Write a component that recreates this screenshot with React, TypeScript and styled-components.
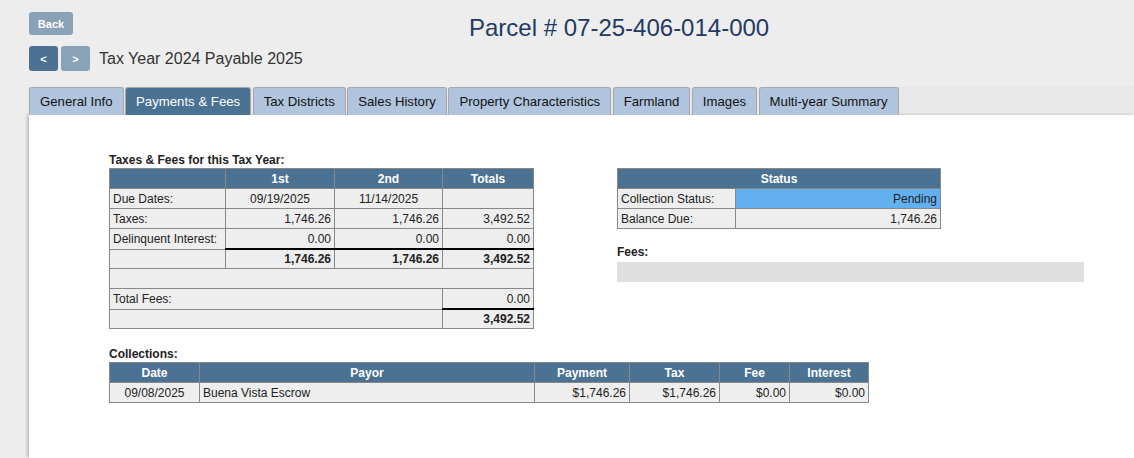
import React from 'react';
import styled, { createGlobalStyle } from 'styled-components';

const GlobalStyle = createGlobalStyle`
  html, body {
    margin: 0;
    padding: 0;
    background: #ededed;
    font-family: 'Liberation Sans', Arial, sans-serif;
    color: #222;
  }
`;

const tabs = [
  'General Info',
  'Payments & Fees',
  'Tax Districts',
  'Sales History',
  'Property Characteristics',
  'Farmland',
  'Images',
  'Multi-year Summary',
];

const collections = [
  {
    date: '09/08/2025',
    payor: 'Buena Vista Escrow',
    payment: '$1,746.26',
    tax: '$1,746.26',
    fee: '$0.00',
    interest: '$0.00',
  },
];

const App: React.FC = () => {
  return (
    <Page>
      <GlobalStyle />
      <Header>
        <HeaderLeft>
          <BackButton>Back</BackButton>
          <YearRow>
            <NavButton $active>&lt;</NavButton>
            <NavButton>&gt;</NavButton>
            <YearText>Tax Year 2024 Payable 2025</YearText>
          </YearRow>
        </HeaderLeft>
        <Title>Parcel # 07-25-406-014-000</Title>
      </Header>

      <TabBar>
        {tabs.map((t) => (
          <Tab key={t} $active={t === 'Payments & Fees'}>
            {t}
          </Tab>
        ))}
      </TabBar>

      <Panel>
        <TopRow>
          <LeftCol>
            <SectionLabel>Taxes &amp; Fees for this Tax Year:</SectionLabel>
            <Grid>
              <colgroup>
                <col style={{ width: 116 }} />
                <col style={{ width: 109 }} />
                <col style={{ width: 108 }} />
                <col style={{ width: 91 }} />
              </colgroup>
              <thead>
                <tr>
                  <Th></Th>
                  <Th>1st</Th>
                  <Th>2nd</Th>
                  <Th>Totals</Th>
                </tr>
              </thead>
              <tbody>
                <tr>
                  <Td>Due Dates:</Td>
                  <Td $align="center">09/19/2025</Td>
                  <Td $align="center">11/14/2025</Td>
                  <Td></Td>
                </tr>
                <tr>
                  <Td>Taxes:</Td>
                  <Td $align="right">1,746.26</Td>
                  <Td $align="right">1,746.26</Td>
                  <Td $align="right">3,492.52</Td>
                </tr>
                <tr>
                  <Td>Delinquent Interest:</Td>
                  <Td $align="right">0.00</Td>
                  <Td $align="right">0.00</Td>
                  <Td $align="right">0.00</Td>
                </tr>
                <tr>
                  <Td $short></Td>
                  <Td $align="right" $bold $rule>1,746.26</Td>
                  <Td $align="right" $bold $rule>1,746.26</Td>
                  <Td $align="right" $bold $rule>3,492.52</Td>
                </tr>
                <tr>
                  <Td colSpan={4}></Td>
                </tr>
                <tr>
                  <Td colSpan={3}>Total Fees:</Td>
                  <Td $align="right">0.00</Td>
                </tr>
                <tr>
                  <Td colSpan={3} $short></Td>
                  <Td $align="right" $bold $rule>3,492.52</Td>
                </tr>
              </tbody>
            </Grid>
          </LeftCol>

          <RightCol>
            <Grid>
              <colgroup>
                <col style={{ width: 118 }} />
                <col style={{ width: 205 }} />
              </colgroup>
              <thead>
                <tr>
                  <Th colSpan={2}>Status</Th>
                </tr>
              </thead>
              <tbody>
                <tr>
                  <Td>Collection Status:</Td>
                  <Td $align="right" $highlight>Pending</Td>
                </tr>
                <tr>
                  <Td>Balance Due:</Td>
                  <Td $align="right">1,746.26</Td>
                </tr>
              </tbody>
            </Grid>
            <FeesLabel>Fees:</FeesLabel>
            <FeesBar />
          </RightCol>
        </TopRow>

        <CollectionsLabel>Collections:</CollectionsLabel>
        <Grid>
          <colgroup>
            <col style={{ width: 90 }} />
            <col style={{ width: 335 }} />
            <col style={{ width: 95 }} />
            <col style={{ width: 90 }} />
            <col style={{ width: 70 }} />
            <col style={{ width: 79 }} />
          </colgroup>
          <thead>
            <tr>
              <Th>Date</Th>
              <Th>Payor</Th>
              <Th>Payment</Th>
              <Th>Tax</Th>
              <Th>Fee</Th>
              <Th>Interest</Th>
            </tr>
          </thead>
          <tbody>
            {collections.map((c) => (
              <tr key={c.date + c.payor}>
                <Td $align="center">{c.date}</Td>
                <Td>{c.payor}</Td>
                <Td $align="right">{c.payment}</Td>
                <Td $align="right">{c.tax}</Td>
                <Td $align="right">{c.fee}</Td>
                <Td $align="right">{c.interest}</Td>
              </tr>
            ))}
          </tbody>
        </Grid>
      </Panel>
    </Page>
  );
};

const Page = styled.div`
  min-height: 458px;
  overflow: hidden;
`;

const Header = styled.div`
  display: grid;
  grid-template-columns: 440px auto;
  padding: 12px 0 0 29px;
  height: 75px;
  box-sizing: border-box;
`;

const HeaderLeft = styled.div`
  display: flex;
  flex-direction: column;
  gap: 11px;
`;

const BackButton = styled.button`
  width: 44px;
  height: 23px;
  padding: 0;
  border: none;
  border-radius: 3px;
  background: #8aa2b7;
  color: #fff;
  font-family: 'Liberation Sans', Arial, sans-serif;
  font-size: 11px;
  font-weight: bold;
`;

const YearRow = styled.div`
  display: flex;
  align-items: center;
  gap: 3px;
`;

const NavButton = styled.button<{ $active?: boolean }>`
  width: 29px;
  height: 25px;
  padding: 0;
  border: none;
  border-radius: 3px;
  background: ${(p) => (p.$active ? '#4c7192' : '#8aa2b7')};
  color: #fff;
  font-family: 'Liberation Sans', Arial, sans-serif;
  font-size: 11px;
  font-weight: bold;
`;

const YearText = styled.span`
  margin-left: 6px;
  font-size: 16px;
  color: #333;
`;

const Title = styled.h1`
  margin: 2px 0 0;
  font-size: 24px;
  font-weight: normal;
  color: #233a63;
`;

const TabBar = styled.div`
  display: flex;
  gap: 1.5px;
  margin: 12px 0 0 29px;
  height: 28px;
  background: #e8e8e8;
  box-shadow: 0 1px 2px rgba(0, 0, 0, 0.08);
`;

const Tab = styled.div<{ $active?: boolean }>`
  display: flex;
  align-items: center;
  padding: 0 10px;
  height: 27px;
  border: 1px solid #a8a8a8;
  border-bottom: none;
  border-radius: 3px 3px 0 0;
  background: ${(p) => (p.$active ? '#4a7293' : '#b0c4de')};
  color: ${(p) => (p.$active ? '#fff' : '#111')};
  font-size: 13.2px;
  white-space: nowrap;
`;

const Panel = styled.div`
  margin-left: 29px;
  min-height: 343px;
  background: #fff;
  box-shadow: -2px 0 3px rgba(0, 0, 0, 0.2);
  padding: 37px 0 0 80px;
  box-sizing: border-box;
`;

const TopRow = styled.div`
  display: flex;
  gap: 83px;
  align-items: flex-start;
`;

const LeftCol = styled.div`
  display: flex;
  flex-direction: column;
`;

const RightCol = styled.div`
  display: flex;
  flex-direction: column;
  width: 467px;
  padding-top: 16px;
`;

const SectionLabel = styled.div`
  font-size: 12px;
  font-weight: bold;
  color: #222;
  line-height: 16px;
`;

const FeesLabel = styled(SectionLabel)`
  margin-top: 14px;
  line-height: 19px;
`;

const CollectionsLabel = styled(SectionLabel)`
  margin-top: 17px;
`;

const FeesBar = styled.div`
  height: 20px;
  background: #dfdfdf;
`;

const Grid = styled.table`
  align-self: flex-start;
  border-collapse: collapse;
  table-layout: fixed;
  border: 1px solid #888;
  font-size: 12px;
`;

const Th = styled.th`
  height: 19px;
  padding: 0 3px;
  background: #4b7292;
  color: #fff;
  font-weight: bold;
  text-align: center;
  border: 1px solid #888;
`;

const Td = styled.td<{
  $align?: 'left' | 'center' | 'right';
  $bold?: boolean;
  $rule?: boolean;
  $highlight?: boolean;
  $short?: boolean;
}>`
  height: ${(p) => (p.$short ? '18px' : '19px')};
  padding: 0 3px;
  background: ${(p) => (p.$highlight ? '#63b0f1' : '#eeeeee')};
  color: #222;
  text-align: ${(p) => p.$align || 'left'};
  font-weight: ${(p) => (p.$bold ? 'bold' : 'normal')};
  border: 1px solid #888;
  ${(p) => (p.$rule ? 'border-top: 2px solid #000; height: 18px;' : '')}
  white-space: nowrap;
`;

export default App;
